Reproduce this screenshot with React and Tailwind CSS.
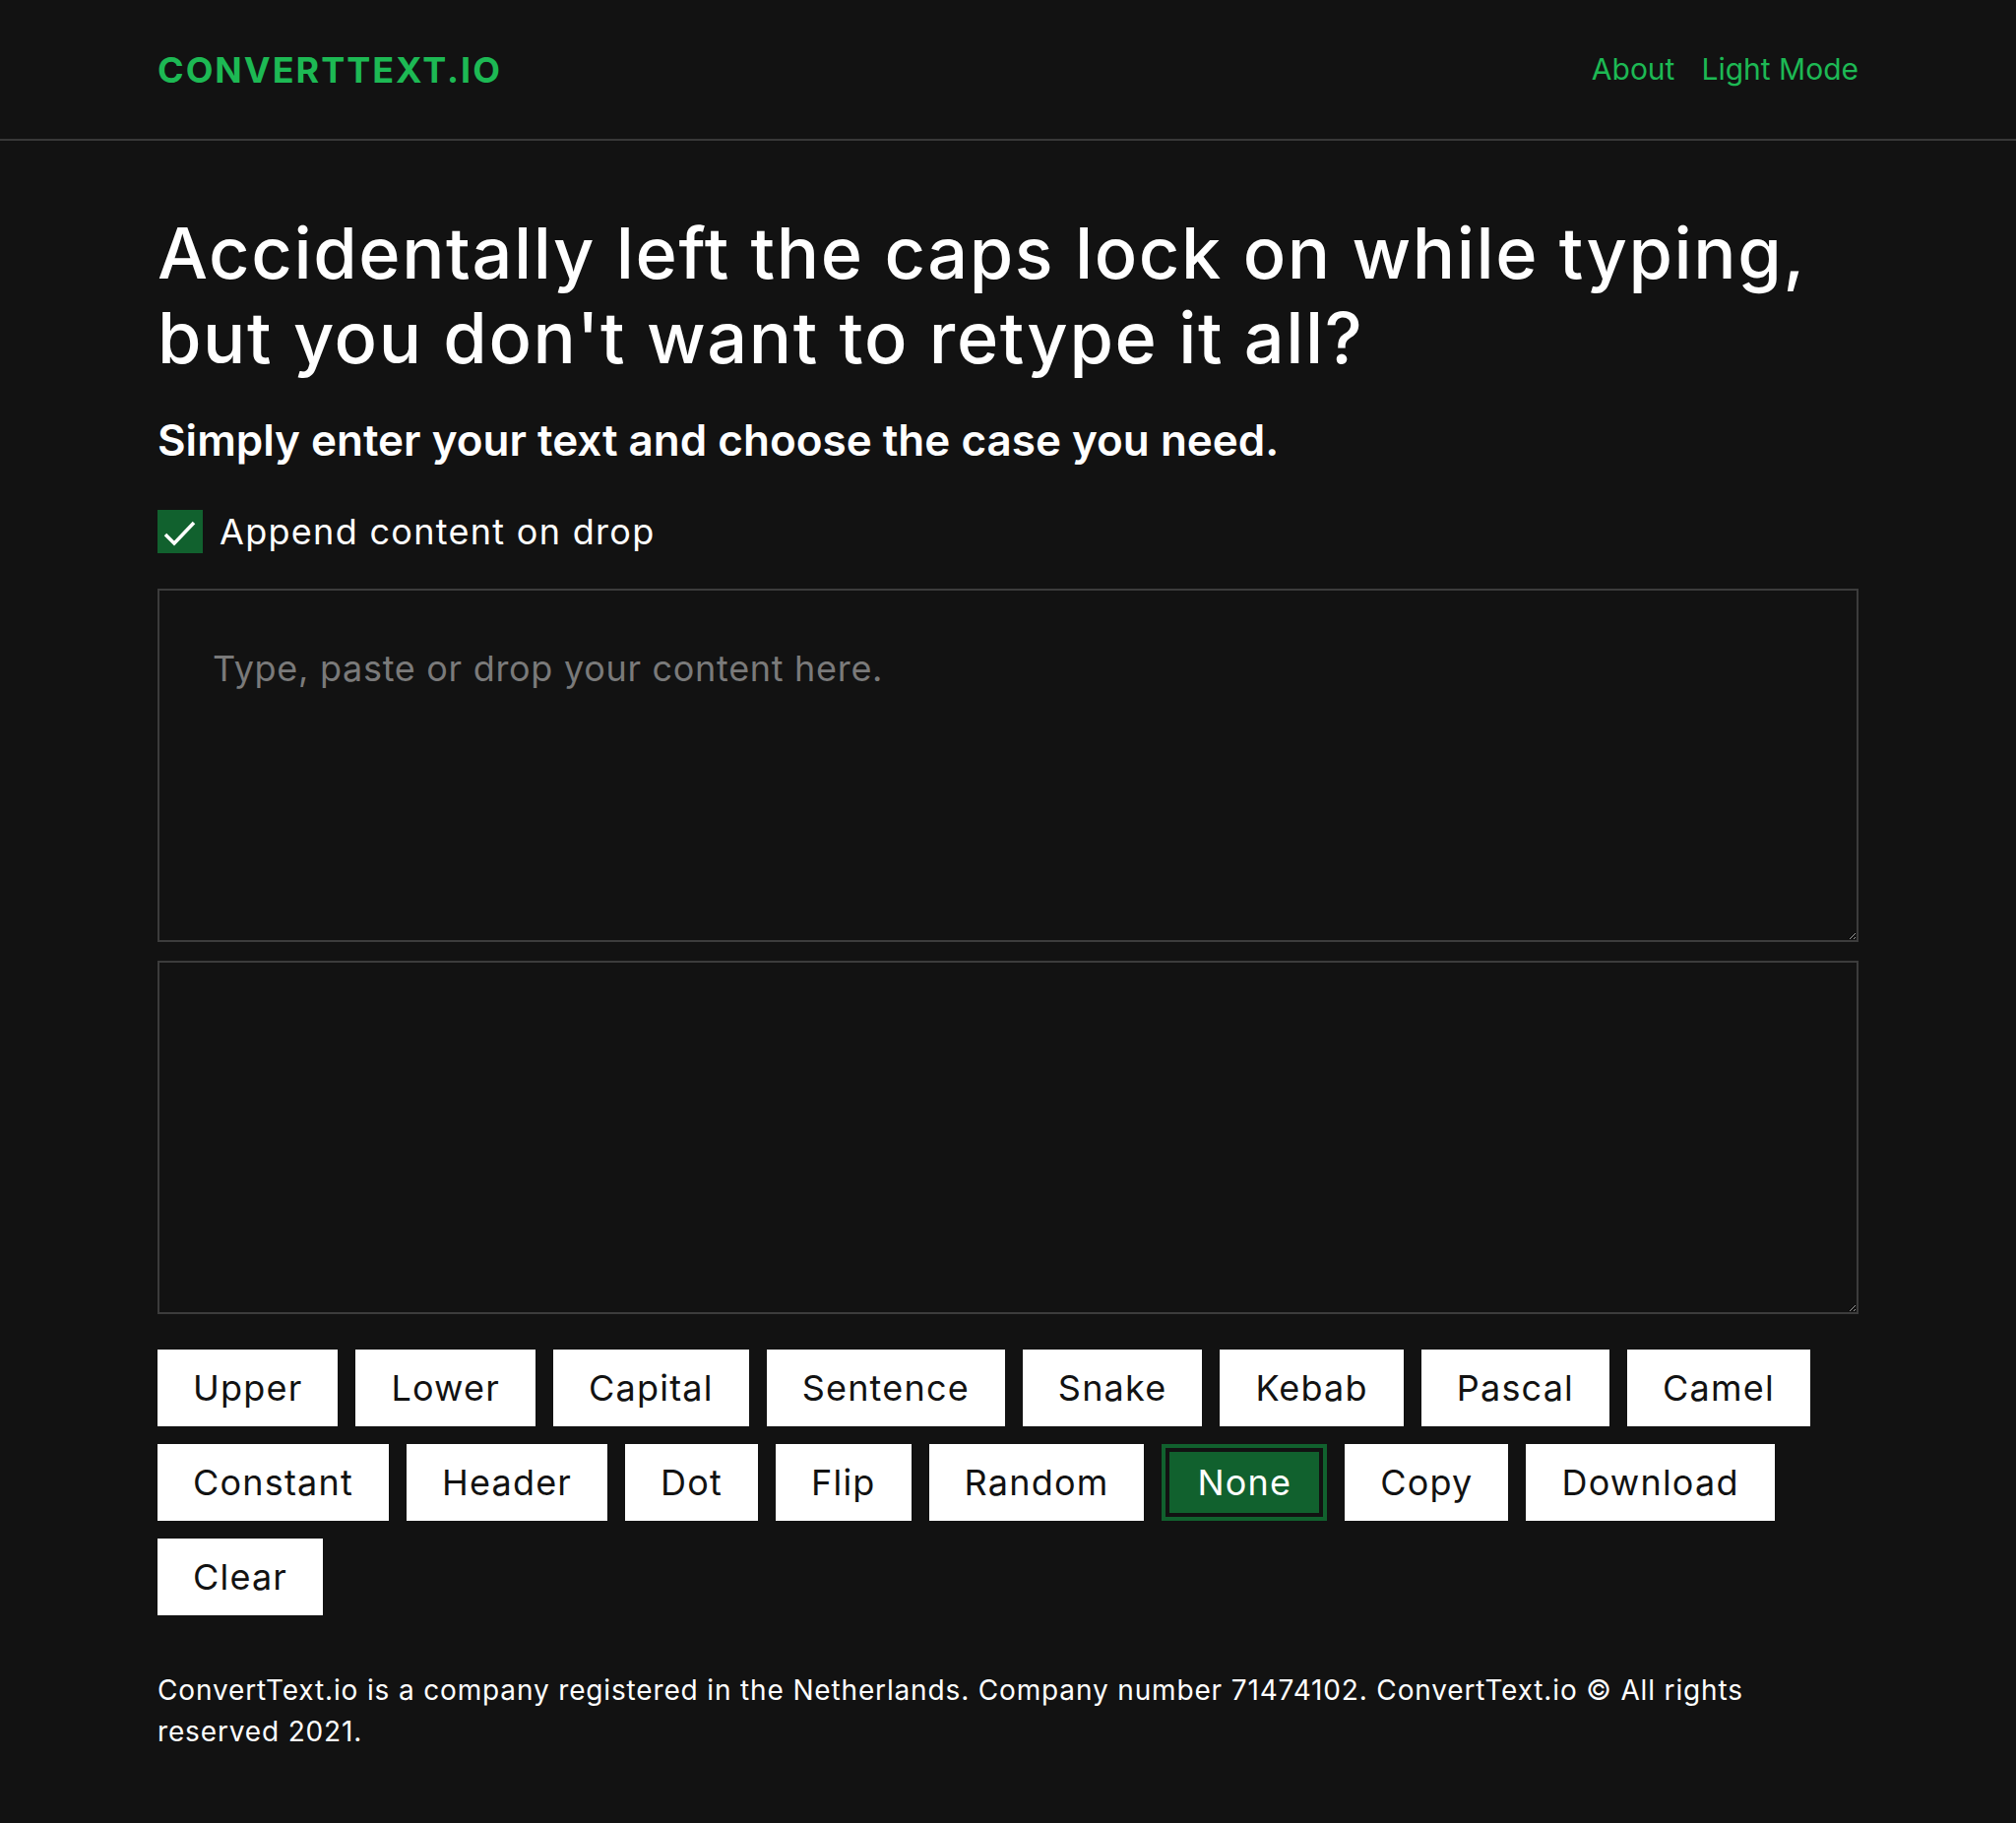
import React from "react";

const buttons1 = ["Upper", "Lower", "Capital", "Sentence", "Snake", "Kebab", "Pascal", "Camel"];
const buttons2 = ["Constant", "Header", "Dot", "Flip", "Random"];
const buttons3 = ["Copy", "Download", "Clear"];

function Btn({ children }) {
  return (
    <button className="h-[78px] px-[36px] bg-white text-[#121212] text-[36px] leading-[54px] tracking-[1.2px]">
      {children}
    </button>
  );
}

export default function App() {
  return (
    <div className="min-h-[1852px] bg-[#121212] text-white font-['Inter',sans-serif]">
      <header className="h-[143px] border-b-2 border-[#383838]">
        <div className="h-full px-[160px] flex items-center justify-between">
          <a className="text-[36px] font-bold text-[#1db954] tracking-[2px]">CONVERTTEXT.IO</a>
          <nav className="flex gap-[27px] text-[30px] text-[#1db954]">
            <a>About</a>
            <a>Light Mode</a>
          </nav>
        </div>
      </header>
      <main className="px-[160px] pt-[71px] pb-[73px]">
        <h1 className="text-[72px] leading-[1.2] font-medium tracking-[1.6px]">
          Accidentally left the caps lock on while typing,
          <br />
          but you don't want to retype it all?
        </h1>
        <h2 className="mt-[27px] text-[44px] leading-[66px] font-semibold">
          Simply enter your text and choose the case you need.
        </h2>
        <label className="mt-[38px] flex items-center h-[44px] gap-[17px]">
          <span className="w-[46px] h-[44px] bg-[#11612e] flex items-center justify-center">
            <svg width="46" height="44" viewBox="0 0 46 44">
              <path d="M8 25 L17 34 L37 13" fill="none" stroke="white" strokeWidth="3.5" />
            </svg>
          </span>
          <span className="text-[36px] leading-[44px] tracking-[1.3px]">Append content on drop</span>
        </label>
        <textarea
          className="mt-[36px] block w-full h-[359px] border-2 border-[#3c3c3c] bg-[#121212] p-[54px] pt-[52px] text-[36px] leading-[54px] tracking-[0.7px] text-white placeholder:text-[#7a7a7a] outline-none"
          placeholder="Type, paste or drop your content here."
        />
        <textarea className="mt-[19px] block w-full h-[359px] border-2 border-[#3c3c3c] bg-[#121212] p-[54px] text-[36px] leading-[54px] text-white outline-none" />
        <div className="mt-[36px] flex flex-wrap gap-[18px]">
          {buttons1.map((b) => (
            <Btn key={b}>{b}</Btn>
          ))}
          {buttons2.map((b) => (
            <Btn key={b}>{b}</Btn>
          ))}
          <button className="h-[78px] px-[36px] bg-[#11612e] text-white text-[36px] leading-[54px] tracking-[1.2px] shadow-[inset_0_0_0_4px_#11612e,inset_0_0_0_8px_#121212]">
            None
          </button>
          {buttons3.map((b) => (
            <Btn key={b}>{b}</Btn>
          ))}
        </div>
        <p className="mt-[55px] text-[28px] leading-[42px] tracking-[0.85px]">
          ConvertText.io is a company registered in the Netherlands. Company number 71474102. ConvertText.io © All rights reserved 2021.
        </p>
      </main>
    </div>
  );
}
